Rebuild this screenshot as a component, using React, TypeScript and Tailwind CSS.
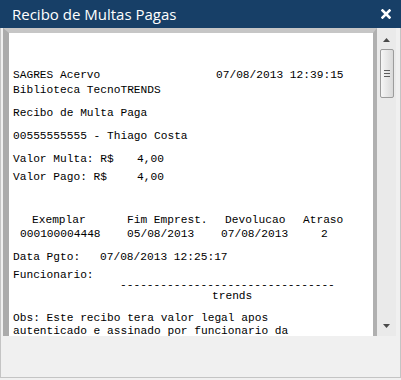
export default function App() {
  const line = 'h-[14px] flex';
  return (
    <div className="w-[401px] h-[380px] flex flex-col bg-[#f0f0f0]">
      {/* title bar */}
      <div className="h-[28px] shrink-0 bg-[#173f67] flex items-center justify-between pl-[12px] pr-[10px]">
        <span className="text-white text-[15px] leading-none font-['Open_Sans',sans-serif]">Recibo de Multas Pagas</span>
        <svg width="10" height="10" viewBox="0 0 10 10">
          <path d="M1.5 1.5 L8.5 8.5 M8.5 1.5 L1.5 8.5" stroke="white" strokeWidth="2.6" strokeLinecap="square" />
        </svg>
      </div>

      <div className="flex-1 flex flex-col border-x border-b border-[#c4c4c4] mb-[2px]">
        <div className="h-[308px] flex">
          {/* receipt text box */}
          <div className="flex-1 ml-[2px] border-l-[6px] border-t-[5px] border-r-[4px] border-l-[#ababab] border-t-[#c6c6c6] border-r-[#b0b0b0] bg-white overflow-hidden">
            <div className="pt-[35px] pl-[4px] text-[11.2px] leading-[14px] text-black whitespace-pre font-['Liberation_Mono',monospace]">
              <div className={line}>
                <span className="w-[203px]">SAGRES Acervo</span>
                <span>07/08/2013 12:39:15</span>
              </div>
              <div className={`${line} mt-[1px]`}>Biblioteca TecnoTRENDS</div>
              <div className={`${line} mt-[9px]`}>Recibo de Multa Paga</div>
              <div className={`${line} mt-[9px]`}>00555555555 - Thiago Costa</div>
              <div className={`${line} mt-[9px]`}>
                <span className="w-[124px]">Valor Multa: R$</span>
                <span>4,00</span>
              </div>
              <div className={`${line} mt-[4px]`}>
                <span className="w-[124px]">Valor Pago: R$</span>
                <span>4,00</span>
              </div>

              <div className={`${line} mt-[29px]`}>
                <span className="w-[19px]" />
                <span className="w-[95px]">Exemplar</span>
                <span className="w-[98px]">Fim Emprest.</span>
                <span className="w-[78px]">Devolucao</span>
                <span>Atraso</span>
              </div>
              <div className={line}>
                <span className="w-[7px]" />
                <span className="w-[107px]">000100004448</span>
                <span className="w-[94px]">05/08/2013</span>
                <span className="w-[100px]">07/08/2013</span>
                <span>2</span>
              </div>

              <div className={`${line} mt-[9px]`}>
                <span className="w-[87px]">Data Pgto:</span>
                <span>07/08/2013 12:25:17</span>
              </div>
              <div className={`${line} mt-[4px]`}>Funcionario:</div>
              <div className={`${line} -mt-[4px] pl-[107px]`}>--------------------------------</div>
              <div className={`${line} -mt-[3px] pl-[199px]`}>trends</div>
              <div className={`${line} mt-[8px]`}>Obs: Este recibo tera valor legal apos</div>
              <div className="h-[11px] leading-[12px] flex">autenticado e assinado por funcionario da</div>
            </div>
          </div>

          {/* scrollbar */}
          <div className="w-[19px] bg-[#eaeaea] flex flex-col items-center">
            <svg className="mt-[10px]" width="7" height="4" viewBox="0 0 7 4">
              <path d="M3.5 0 L7 4 L0 4 Z" fill="#4a4a4a" />
            </svg>
            <div className="mt-[7px] ml-[1px] w-[14px] h-[49px] rounded-[2px] border border-[#9c9c9c] bg-gradient-to-r from-[#f6f6f6] to-[#d9d9d9] flex flex-col items-center justify-center gap-[2px]">
              <div className="w-[6px] h-[1px] bg-[#5c5c5c]" />
              <div className="w-[6px] h-[1px] bg-[#5c5c5c]" />
              <div className="w-[6px] h-[1px] bg-[#5c5c5c]" />
            </div>
            <div className="flex-1" />
            <svg className="mb-[8px]" width="7" height="4" viewBox="0 0 7 4">
              <path d="M0 0 L7 0 L3.5 4 Z" fill="#4a4a4a" />
            </svg>
          </div>
          <div className="w-[4px]" />
        </div>
      </div>
    </div>
  );
}
